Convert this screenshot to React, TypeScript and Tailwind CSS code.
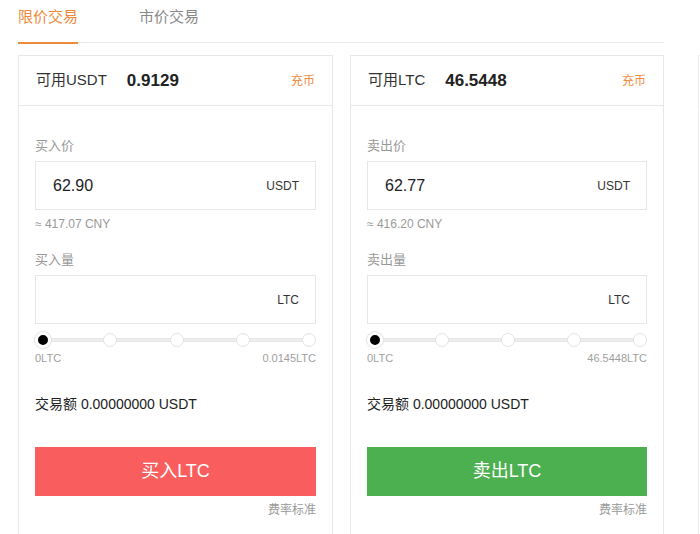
import React from "react";

const font = { fontFamily: '"Liberation Sans", "Noto Sans CJK SC", sans-serif' };

function Slider({ max }: { max: string }) {
  return (
    <>
      <div className="relative mt-[8px] h-[16px]">
        <div className="absolute left-[8px] right-[7px] top-[6px] h-[4px] rounded-full bg-[#eeeeee] border border-[#e6e6e6]" />
        <div className="absolute inset-0 flex items-center justify-between">
          <div className="w-[16px] h-[16px] rounded-full bg-black border-[3px] border-white shadow-[0_0_0_1px_#e3e3e3]" />
          <div className="w-[14px] h-[14px] rounded-full bg-white border border-[#e3e3e3]" />
          <div className="w-[14px] h-[14px] rounded-full bg-white border border-[#e3e3e3]" />
          <div className="w-[14px] h-[14px] rounded-full bg-white border border-[#e3e3e3]" />
          <div className="w-[14px] h-[14px] rounded-full bg-white border border-[#e3e3e3]" />
        </div>
      </div>
      <div className="mt-[3px] flex justify-between text-[11px] leading-[14px] text-[#a0a0a0]">
        <span>0LTC</span>
        <span>{max}</span>
      </div>
    </>
  );
}

function Panel({
  availLabel,
  availValue,
  priceLabel,
  price,
  cny,
  amountLabel,
  max,
  button,
  buttonClass,
  width,
}: {
  availLabel: string;
  availValue: string;
  priceLabel: string;
  price: string;
  cny: string;
  amountLabel: string;
  max: string;
  button: string;
  buttonClass: string;
  width: string;
}) {
  return (
    <div className={`${width} shrink-0 border border-[#e8e8e8] bg-white h-[500px]`}>
      <div className="h-[50px] flex items-center border-b border-[#e8e8e8] pl-[17px] pr-[17px]">
        <span className="text-[15px] text-[#333]">{availLabel}</span>
        <span className="ml-[20px] text-[17px] font-bold text-[#222]">{availValue}</span>
        <span className="ml-auto text-[12px] text-[#ee8a3c]">充币</span>
      </div>
      <div className="px-[16px]">
        <div className="mt-[30px] h-[20px] leading-[20px] text-[13px] text-[#999]">{priceLabel}</div>
        <div className="mt-[5px] h-[49px] border border-[#e6e6e6] flex items-center pl-[17px] pr-[16px]">
          <span className="text-[16px] text-[#222]">{price}</span>
          <span className="ml-auto text-[12px] text-[#333]">USDT</span>
        </div>
        <div className="mt-[5px] h-[18px] leading-[18px] text-[12px] text-[#999]">{cny}</div>
        <div className="mt-[17px] h-[20px] leading-[20px] text-[13px] text-[#999]">{amountLabel}</div>
        <div className="mt-[5px] h-[49px] border border-[#e6e6e6] flex items-center pl-[17px] pr-[16px]">
          <span className="ml-auto text-[12px] text-[#333]">LTC</span>
        </div>
        <Slider max={max} />
        <div className="mt-[29px] h-[20px] leading-[20px] text-[14px] text-[#222]">交易额 0.00000000 USDT</div>
        <div className={`mt-[33px] h-[49px] flex items-center justify-center text-white text-[18px] ${buttonClass}`}>
          {button}
        </div>
        <div className="mt-[6px] h-[16px] leading-[16px] text-right text-[12px] text-[#999]">费率标准</div>
      </div>
    </div>
  );
}

export default function App() {
  return (
    <div className="w-[700px] h-[534px] overflow-hidden bg-white" style={font}>
      <div className="pl-[18px]">
        <div className="w-[646px] h-[43px] flex items-start border-b border-[#e8e8e8]">
          <div className="h-[43px] w-[60px] flex flex-col">
            <div className="h-[34px] leading-[34px] text-[15px] text-[#ee8a3c] whitespace-nowrap">限价交易</div>
            <div className="mt-auto h-[2px] bg-[#ee8a3c] mb-[-1px]" />
          </div>
          <div className="ml-[61px] h-[34px] leading-[34px] text-[15px] text-[#888] whitespace-nowrap">市价交易</div>
        </div>
        <div className="mt-[12px] flex gap-[17px]">
          <Panel
            width="w-[315px]"
            availLabel="可用USDT"
            availValue="0.9129"
            priceLabel="买入价"
            price="62.90"
            cny="≈ 417.07 CNY"
            amountLabel="买入量"
            max="0.0145LTC"
            button="买入LTC"
            buttonClass="bg-[#f95d5d]"
          />
          <Panel
            width="w-[314px]"
            availLabel="可用LTC"
            availValue="46.5448"
            priceLabel="卖出价"
            price="62.77"
            cny="≈ 416.20 CNY"
            amountLabel="卖出量"
            max="46.5448LTC"
            button="卖出LTC"
            buttonClass="bg-[#4caf50]"
          />
          <div className="ml-[17px] w-[315px] shrink-0 h-[500px] border border-[#ededed]">
            <div className="h-[52px] border-b border-[#ededed]" />
          </div>
        </div>
      </div>
    </div>
  );
}
